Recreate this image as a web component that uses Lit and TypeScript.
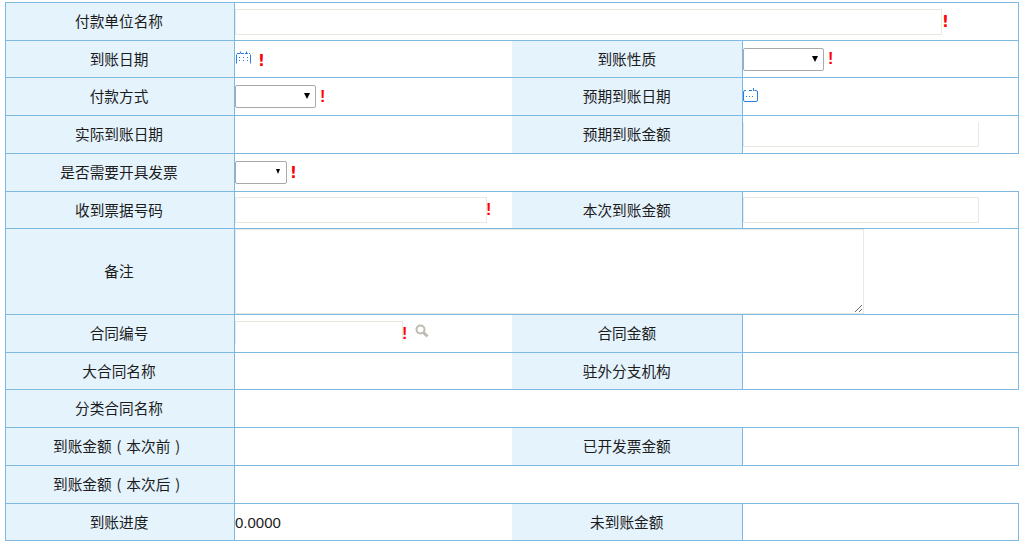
import { LitElement, html, css, nothing } from "lit";
import { customElement } from "lit/decorators.js";

type Cell = { label: unknown; value?: unknown; wide?: boolean; open?: boolean };
const calA = html`<svg class="cal calA" width="15" height="14" viewBox="0 0 15 14" fill="none" stroke="#2b7fe0" stroke-width="1"><path d="M0.500 3.500v9M14.500 3.500v9" /><path d="M1 2.500h13" stroke-dasharray="3 1" /><path d="M4.500 0.500v2M10.500 0.500v2" /><path d="M3 6.500h9M3 9.500h9" stroke-dasharray="1 3" /></svg>`;
const calB = html`<svg class="cal calB" width="15" height="15" viewBox="0 0 15 15" fill="none" stroke="#2b7fe0" stroke-width="1"><path d="M3 2.500H2a1.500 1.500 0 0 0-1.500 1.500v8a1.500 1.500 0 0 0 1.500 1.500h11a1.500 1.500 0 0 0 1.500-1.500V4a1.500 1.500 0 0 0-1.500-1.500h-1.500M6 2.500h3" /><path d="M10.500 0v3" /><path d="M3 8.500h9" stroke-dasharray="1 2" /></svg>`;
const search = html`<svg class="search" width="14" height="14" viewBox="0 0 14 14" fill="none" stroke="#bfbbb3"><circle cx="5.500" cy="5.500" r="4" stroke-width="2" /><path d="M8.500 8.500l4 4" stroke-width="3" /></svg>`;
const bang = html`<span class="bang">!</span>`;
const thin = html`<span class="bang thin">!</span>`;
const near = html`<span class="bang thin near">!</span>`;
const select = (cls: string) => html`<span class="sel ${cls}"><select></select></span>`;
const amount = (tail: string) => html`到账金额<span class="paren">(</span>本次${tail}<span class="paren">)</span>`;

@customElement("app-root")
export class AppRoot extends LitElement {
  static styles = css`
    :host { display: block; padding: 2px 0 0 5px; font-family: "Noto Sans CJK SC", "Liberation Sans", sans-serif; font-size: 14.667px; color: #1c1c1c; }
    table { border-collapse: collapse; table-layout: fixed; width: 1013px; }
    .c1 { width: 229px; } .c2 { width: 277px; } .c3 { width: 231px; } .c4 { width: 276px; }
    tr { height: 38px; }
    tr.short { height: 37px; }
    tr.tall { height: 86px; }
    td { border: 1px solid #7db9e0; padding: 0; }
    td.label { background: #e4f3fc; text-align: center; padding: 0 2px 2px 0; box-sizing: border-box; }
    td.noleft { border-left: none; padding-right: 0; }
    td.noright { border-right: none; }
    .paren { display: inline-block; width: 1em; text-align: center; }
    .v { display: flex; align-items: center; }
    .num { font-family: "Liberation Sans", sans-serif; font-size: 15px; }
    input, textarea, select { box-sizing: border-box; margin: 0; background: #fff; }
    input { border: 1px solid #e9e9e1; outline: none; height: 26px; padding: 0; }
    .w707 { width: 707px; } .w235 { width: 236px; } .w250 { width: 252px; } .w167 { width: 168px; }
    .notop { border-top-color: #fff; height: 25px; }
    .nobottom { border-bottom-color: #fff; height: 23px; margin-bottom: 2px; }
    textarea { display: block; width: 629px; height: 85px; border: 1px solid #e9e9e1; padding: 0; }
    .sel { position: relative; display: block; height: 23px; }
    .sel select { display: block; appearance: none; width: 100%; height: 23px; border: 1px solid #a9a9a9; border-radius: 2px; }
    .sel::after { content: ""; position: absolute; top: 8px; right: 6px; border-style: solid; border-width: 6px 3.5px 0; border-color: #000 transparent transparent; }
    .s81 { width: 81px; } .s52 { width: 52px; }
    .s52::after { right: 7px; border-width: 5px 2.5px 0; }
    .bang { color: #f00; font: bold 15px "DejaVu Sans", sans-serif; width: 5px; text-align: center; line-height: 18px; }
    .thin { font-family: "Liberation Sans", sans-serif; font-size: 16px; margin-left: 4px; }
    .near { margin-left: -1px; }
    .low { margin-top: 3px; }
    .cal { flex: none; }
    .calA { margin-bottom: 2px; margin-left: 1px; }
    .calB { margin-bottom: 3px; }
    .gap { width: 7px; }
    .gap5 { width: 3px; }
    .search { margin-left: 8px; margin-top: -6px; }
  `;

  private row(cells: Cell[], cls = "") {
    return html`<tr class=${cls}>${cells.map((c, i) => html`
      <td class="label ${i === 1 ? "noleft" : ""}">${c.label}</td>
      <td class=${(i === 0 && !c.wide) || c.open ? "noright" : ""} colspan=${c.wide ? 3 : 1}><div class="v">${c.value ?? nothing}</div></td>`)}</tr>`;
  }

  render() {
    return html`<table>
      <colgroup><col class="c1" /><col class="c2" /><col class="c3" /><col class="c4" /></colgroup>
      <tbody>
      ${this.row([{ label: "付款单位名称", wide: true, value: html`<input class="w707" />${bang}` }])}
      ${this.row([
        { label: "到账日期", value: html`${calA}<span class="gap"></span><span class="bang low">!</span>` },
        { label: "到账性质", value: html`${select("s81")}${thin}` },
      ], "short")}
      ${this.row([
        { label: "付款方式", value: html`${select("s81")}${thin}` },
        { label: "预期到账日期", value: calB },
      ])}
      ${this.row([
        { label: "实际到账日期" },
        { label: "预期到账金额", value: html`<input class="w235 notop" />` },
      ])}
      ${this.row([{ label: "是否需要开具发票", wide: true, open: true, value: html`${select("s52")}<span class="gap5"></span>${bang}` }])}
      ${this.row([
        { label: "收到票据号码", value: html`<input class="w250" />${near}` },
        { label: "本次到账金额", value: html`<input class="w235" />` },
      ], "short")}
      ${this.row([{ label: "备注", wide: true, value: html`<textarea></textarea>` }], "tall")}
      ${this.row([
        { label: "合同编号", value: html`<input class="w167 nobottom" />${near}${search}` },
        { label: "合同金额" },
      ])}
      ${this.row([{ label: "大合同名称" }, { label: "驻外分支机构" }], "short")}
      ${this.row([{ label: "分类合同名称", wide: true, open: true }])}
      ${this.row([{ label: amount("前") }, { label: "已开发票金额" }])}
      ${this.row([{ label: amount("后"), wide: true, open: true }])}
      ${this.row([
        { label: "到账进度", value: html`<span class="num">0.0000</span>` },
        { label: "未到账金额" },
      ], "short")}
      </tbody>
    </table>`;
  }
}
